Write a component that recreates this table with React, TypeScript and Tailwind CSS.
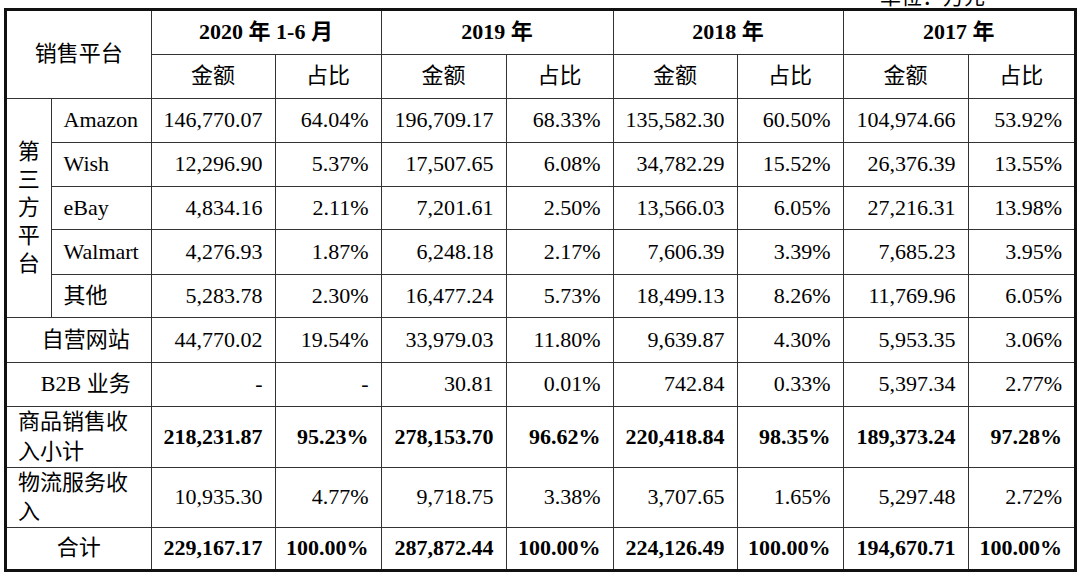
import React from "react";

const FONT = { fontFamily: '"Liberation Serif", "Noto Sans CJK SC", serif' };

const platforms: string[][] = [
  ["Amazon", "146,770.07", "64.04%", "196,709.17", "68.33%", "135,582.30", "60.50%", "104,974.66", "53.92%"],
  ["Wish", "12,296.90", "5.37%", "17,507.65", "6.08%", "34,782.29", "15.52%", "26,376.39", "13.55%"],
  ["eBay", "4,834.16", "2.11%", "7,201.61", "2.50%", "13,566.03", "6.05%", "27,216.31", "13.98%"],
  ["Walmart", "4,276.93", "1.87%", "6,248.18", "2.17%", "7,606.39", "3.39%", "7,685.23", "3.95%"],
  ["其他", "5,283.78", "2.30%", "16,477.24", "5.73%", "18,499.13", "8.26%", "11,769.96", "6.05%"],
];

const platformHeights = ["h-[44px]", "h-[44px]", "h-[43px]", "h-[45px]", "h-[43px]"];

const td = "border border-[#333] p-0 align-middle";
const num = td + " text-right pr-3";

function Nums({ vals, bold }: { vals: string[]; bold?: boolean }) {
  return (
    <>
      {vals.map((v, i) => (
        <td key={i} className={num + (bold ? " font-bold" : "")}>
          {v}
        </td>
      ))}
    </>
  );
}

const vertical = ["第", "三", "方", "平", "台"];

export default function App() {
  return (
    <div className="w-[1080px] h-[574px] overflow-hidden bg-white text-black" style={FONT}>
      <div className="h-[8px] overflow-hidden flex justify-end pr-[95px]">
        <div className="text-[21px] leading-[21px] -mt-[13px] whitespace-nowrap">单位：万元</div>
      </div>
      <div className="ml-[4px] w-[1073px] border-[3px] border-[#111]">
        <table className="w-[1067px] table-fixed border-collapse border-hidden text-[22px] leading-[26px]">
          <colgroup>
            <col className="w-[44px]" />
            <col className="w-[100px]" />
            <col className="w-[124px]" />
            <col className="w-[106px]" />
            <col className="w-[125px]" />
            <col className="w-[107px]" />
            <col className="w-[124px]" />
            <col className="w-[106px]" />
            <col className="w-[125px]" />
            <col className="w-[106px]" />
          </colgroup>
          <tbody>
            <tr className="h-[43px]">
              <td colSpan={2} rowSpan={2} className={td + " text-center"}>
                销售平台
              </td>
              <td colSpan={2} className={td + " text-center font-bold"}>2020 年 1-6 月</td>
              <td colSpan={2} className={td + " text-center font-bold"}>2019 年</td>
              <td colSpan={2} className={td + " text-center font-bold"}>2018 年</td>
              <td colSpan={2} className={td + " text-center font-bold"}>2017 年</td>
            </tr>
            <tr className="h-[44px]">
              {[0, 1, 2, 3].map((i) => (
                <React.Fragment key={i}>
                  <td className={td + " text-center"}>金额</td>
                  <td className={td + " text-center"}>占比</td>
                </React.Fragment>
              ))}
            </tr>
            {platforms.map((r, idx) => (
              <tr key={r[0]} className={platformHeights[idx]}>
                {idx === 0 && (
                  <td rowSpan={5} className={td + " text-center"}>
                    <div className="flex flex-col items-center leading-[28px]">
                      {vertical.map((c) => (
                        <span key={c}>{c}</span>
                      ))}
                    </div>
                  </td>
                )}
                <td className={td + " pl-3 text-left"}>{r[0]}</td>
                <Nums vals={r.slice(1)} />
              </tr>
            ))}
            <tr className="h-[45px]">
              <td colSpan={2} className={td + " text-center pl-[14px]"}>自营网站</td>
              <Nums vals={["44,770.02", "19.54%", "33,979.03", "11.80%", "9,639.87", "4.30%", "5,953.35", "3.06%"]} />
            </tr>
            <tr className="h-[44px]">
              <td colSpan={2} className={td + " text-center pl-[14px]"}>B2B 业务</td>
              <Nums vals={["-", "-", "30.81", "0.01%", "742.84", "0.33%", "5,397.34", "2.77%"]} />
            </tr>
            <tr className="h-[59px]">
              <td colSpan={2} className={td + " text-left px-[11px] leading-[30px]"}>商品销售收入小计</td>
              <Nums bold vals={["218,231.87", "95.23%", "278,153.70", "96.62%", "220,418.84", "98.35%", "189,373.24", "97.28%"]} />
            </tr>
            <tr className="h-[60px]">
              <td colSpan={2} className={td + " text-left px-[11px] leading-[29px]"}>物流服务收入</td>
              <Nums vals={["10,935.30", "4.77%", "9,718.75", "3.38%", "3,707.65", "1.65%", "5,297.48", "2.72%"]} />
            </tr>
            <tr className="h-[42px]">
              <td colSpan={2} className={td + " text-center"}>合计</td>
              <Nums bold vals={["229,167.17", "100.00%", "287,872.44", "100.00%", "224,126.49", "100.00%", "194,670.71", "100.00%"]} />
            </tr>
          </tbody>
        </table>
      </div>
    </div>
  );
}
